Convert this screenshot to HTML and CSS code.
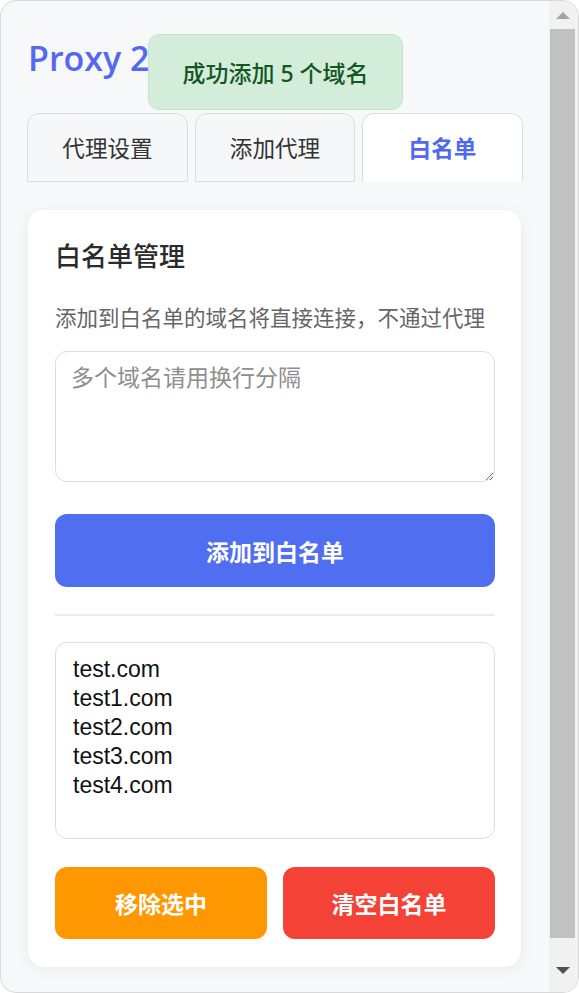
FILE: index.html
```html
<!DOCTYPE html>
<html lang="zh-CN">
<head>
<meta charset="utf-8">
<title>Proxy</title>
<link rel="stylesheet" href="styles.css">
</head>
<body>
<div class="app">
  <div class="viewport">
    <h1 class="title">Proxy 2.0</h1>
    <div class="toast">成功添加 5 个域名</div>
    <div class="tabs">
      <div class="tab">代理设置</div>
      <div class="tab">添加代理</div>
      <div class="tab active">白名单</div>
    </div>
    <div class="card">
      <h2 class="card-title">白名单管理</h2>
      <p class="desc">添加到白名单的域名将直接连接，不通过代理</p>
      <textarea class="input" placeholder="多个域名请用换行分隔"></textarea>
      <button class="btn btn-primary">添加到白名单</button>
      <div class="divider"></div>
      <div class="list">
        <div class="item">test.com</div>
        <div class="item">test1.com</div>
        <div class="item">test2.com</div>
        <div class="item">test3.com</div>
        <div class="item">test4.com</div>
      </div>
      <div class="actions">
        <button class="btn btn-warn">移除选中</button>
        <button class="btn btn-danger">清空白名单</button>
      </div>
    </div>
  </div>
  <div class="scrollbar">
    <div class="sb-btn"><span class="arrow-up"></span></div>
    <div class="sb-track"><div class="sb-thumb"></div></div>
    <div class="sb-btn"><span class="arrow-down"></span></div>
  </div>
</div>
</body>
</html>
```
FILE: styles.css
```css
* { box-sizing: border-box; }
html, body { margin: 0; padding: 0; background: #ffffff; }
body {
  font-family: "Noto Sans", "Noto Sans CJK SC", sans-serif;
}
.app {
  position: relative;
  width: 579px;
  height: 993px;
  border: 1px solid #d9d9d9;
  border-radius: 16px;
  background: #f7f8fa;
  overflow: hidden;
  display: flex;
}
.viewport {
  position: relative;
  flex: 1;
  overflow: hidden;
  padding: 37px 0 0 26px;
}
.title {
  margin: 0 0 35px 1px;
  height: 40px;
  line-height: 40px;
  font-family: "Open Sans", "Noto Sans CJK SC", sans-serif;
  font-size: 34px;
  font-weight: 600;
  color: #5468f0;
  white-space: nowrap;
}
.toast {
  position: absolute;
  left: 147px;
  top: 33px;
  width: 255px;
  height: 76px;
  background: #d4edda;
  border: 1px solid #c3e6cb;
  border-radius: 11px;
  color: #155724;
  font-family: "Noto Sans", "Noto Sans CJK SC", sans-serif;
  font-size: 23px;
  font-weight: 500;
  display: flex;
  align-items: center;
  justify-content: center;
}
.tabs {
  width: 496px;
  display: grid;
  grid-template-columns: 161px 160px 161px;
  column-gap: 7px;
  margin-bottom: 28px;
}
.tab {
  height: 69px;
  border: 1px solid #dcdde0;
  border-radius: 12px 12px 0 0;
  background: #f6f7f9;
  display: flex;
  align-items: center;
  justify-content: center;
  font-family: "Noto Sans CJK SC", sans-serif;
  font-size: 22.6px;
  color: #333333;
}
.tab.active {
  background: #ffffff;
  border-bottom-color: #ffffff;
  color: #5068f0;
  font-weight: 700;
}
.card {
  width: 493px;
  margin-left: 1px;
  background: #ffffff;
  border-radius: 16px;
  box-shadow: 0 2px 14px rgba(0, 0, 0, 0.06);
  padding: 28px 26px 28px 27px;
}
.card-title {
  margin: 0 0 30px;
  height: 34px;
  line-height: 34px;
  font-family: "Noto Sans CJK SC", sans-serif;
  font-size: 26px;
  font-weight: 500;
  color: #2b2b2b;
}
.desc {
  margin: 0 0 19px;
  height: 30px;
  line-height: 30px;
  font-family: "Noto Sans CJK SC", sans-serif;
  font-size: 21.5px;
  color: #666666;
  white-space: nowrap;
}
.input {
  display: block;
  width: 440px;
  height: 131px;
  border: 1px solid #dddddd;
  border-radius: 12px;
  padding: 9px 15px;
  font-family: "Noto Sans CJK SC", sans-serif;
  font-size: 23px;
  line-height: 30px;
  color: #333;
  background: #fff;
  outline: none;
  margin: 0 0 32px;
}
.input::placeholder { color: #8e8e8e; }
.btn {
  display: flex;
  align-items: center;
  justify-content: center;
  border: none;
  border-radius: 12px;
  color: #ffffff;
  font-family: "Noto Sans CJK SC", sans-serif;
  font-size: 23px;
  font-weight: 700;
  padding: 0;
}
.btn-primary {
  width: 440px;
  height: 73px;
  background: #506ff0;
}
.divider {
  height: 2px;
  background: #ececec;
  margin: 27px 0 26px;
}
.list {
  width: 440px;
  height: 197px;
  border: 1px solid #dddddd;
  border-radius: 12px;
  padding: 12px 17px;
  font-family: "Liberation Sans", Arial, sans-serif;
  font-size: 23px;
  color: #111111;
}
.item {
  height: 29px;
  line-height: 29px;
}
.actions {
  margin-top: 28px;
  display: grid;
  grid-template-columns: 212px 212px;
  column-gap: 16px;
}
.actions .btn { height: 72px; width: 100%; }
.btn-warn { background: #ff9800; }
.btn-danger { background: #f44336; }

/* scrollbar */
.scrollbar {
  width: 29px;
  flex: none;
  background: #f1f1f1;
  display: flex;
  flex-direction: column;
  padding: 0 3px 8px 1px;
}
.sb-btn {
  height: 28px;
  flex: none;
  display: flex;
  align-items: center;
  justify-content: center;
}
.sb-track {
  flex: 1;
  display: flex;
  flex-direction: column;
}
.sb-thumb {
  height: 909px;
  background: #c1c1c1;
}
.arrow-up {
  width: 0;
  height: 0;
  border-left: 7px solid transparent;
  border-right: 7px solid transparent;
  border-bottom: 7px solid #a3a3a3;
}
.arrow-down {
  width: 0;
  height: 0;
  border-left: 7px solid transparent;
  border-right: 7px solid transparent;
  border-top: 7px solid #505050;
}
```
